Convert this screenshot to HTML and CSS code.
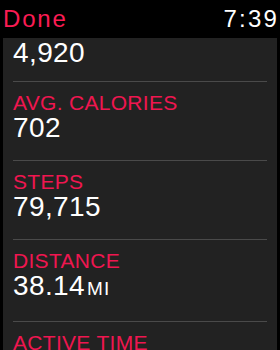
FILE: index.html
```html
<!DOCTYPE html>
<html lang="en">
  <head>
    <meta charset="UTF-8" />
    <meta name="viewport" content="width=device-width, initial-scale=1.0" />
    <title>Workout Summary</title>
    <link rel="stylesheet" href="styles.css">
  </head>
  <body>
    <!-- 상단 바 -->
    <div class="topbar">
      <span class="done">Done</span>
      <span class="clock">7:39</span>
    </div>

    <!-- 요약 목록 -->
    <div class="panel">
      <div class="row first">
        <div class="value">4,920</div>
      </div>
      <div class="row">
        <div class="label">AVG. CALORIES</div>
        <div class="value">702</div>
      </div>
      <div class="row">
        <div class="label">STEPS</div>
        <div class="value">79,715</div>
      </div>
      <div class="row">
        <div class="label">DISTANCE</div>
        <div class="value">38.14<span class="unit">MI</span></div>
      </div>
      <div class="row last">
        <div class="label">ACTIVE TIME</div>
      </div>
    </div>
  </body>
</html>
```

FILE: styles.css
```css
* {
  font-family: "Liberation Sans", Arial, sans-serif;
  padding: 0;
  margin: 0;
  box-sizing: border-box;
}

body {
  width: 280px;
  height: 350px;
  overflow: hidden;
  background: #000000;
}

/* 상단 바 */
.topbar {
  height: 38px;
  padding: 0 3px;
  display: flex;
  justify-content: space-between;
  align-items: center;
  line-height: 38px;
  font-size: 24px;
  letter-spacing: 1.8px;
}

.done {
  color: #fb1c54;
}

.clock {
  color: #ffffff;
  letter-spacing: 2.2px;
  margin-right: -2px;
}

/* 목록 */
.panel {
  margin: 0 3px;
  height: 312px;
  background: #222222;
  overflow: hidden;
}

.row {
  margin: 0 10px;
  padding: 9px 0 19px 0;
  border-top: 1px solid #4a4a4a;
}

.row.first {
  border-top: none;
  padding: 2px 0 15px 0;
}

.row.last {
  padding-bottom: 0;
}

.label {
  color: #ef1650;
  font-size: 21px;
  line-height: 24px;
  letter-spacing: 0.3px;
}

.value {
  color: #ffffff;
  font-size: 28px;
  line-height: 26px;
  letter-spacing: 0.4px;
}

.unit {
  font-size: 19px;
  margin-left: 2px;
  letter-spacing: 1px;
}
```
